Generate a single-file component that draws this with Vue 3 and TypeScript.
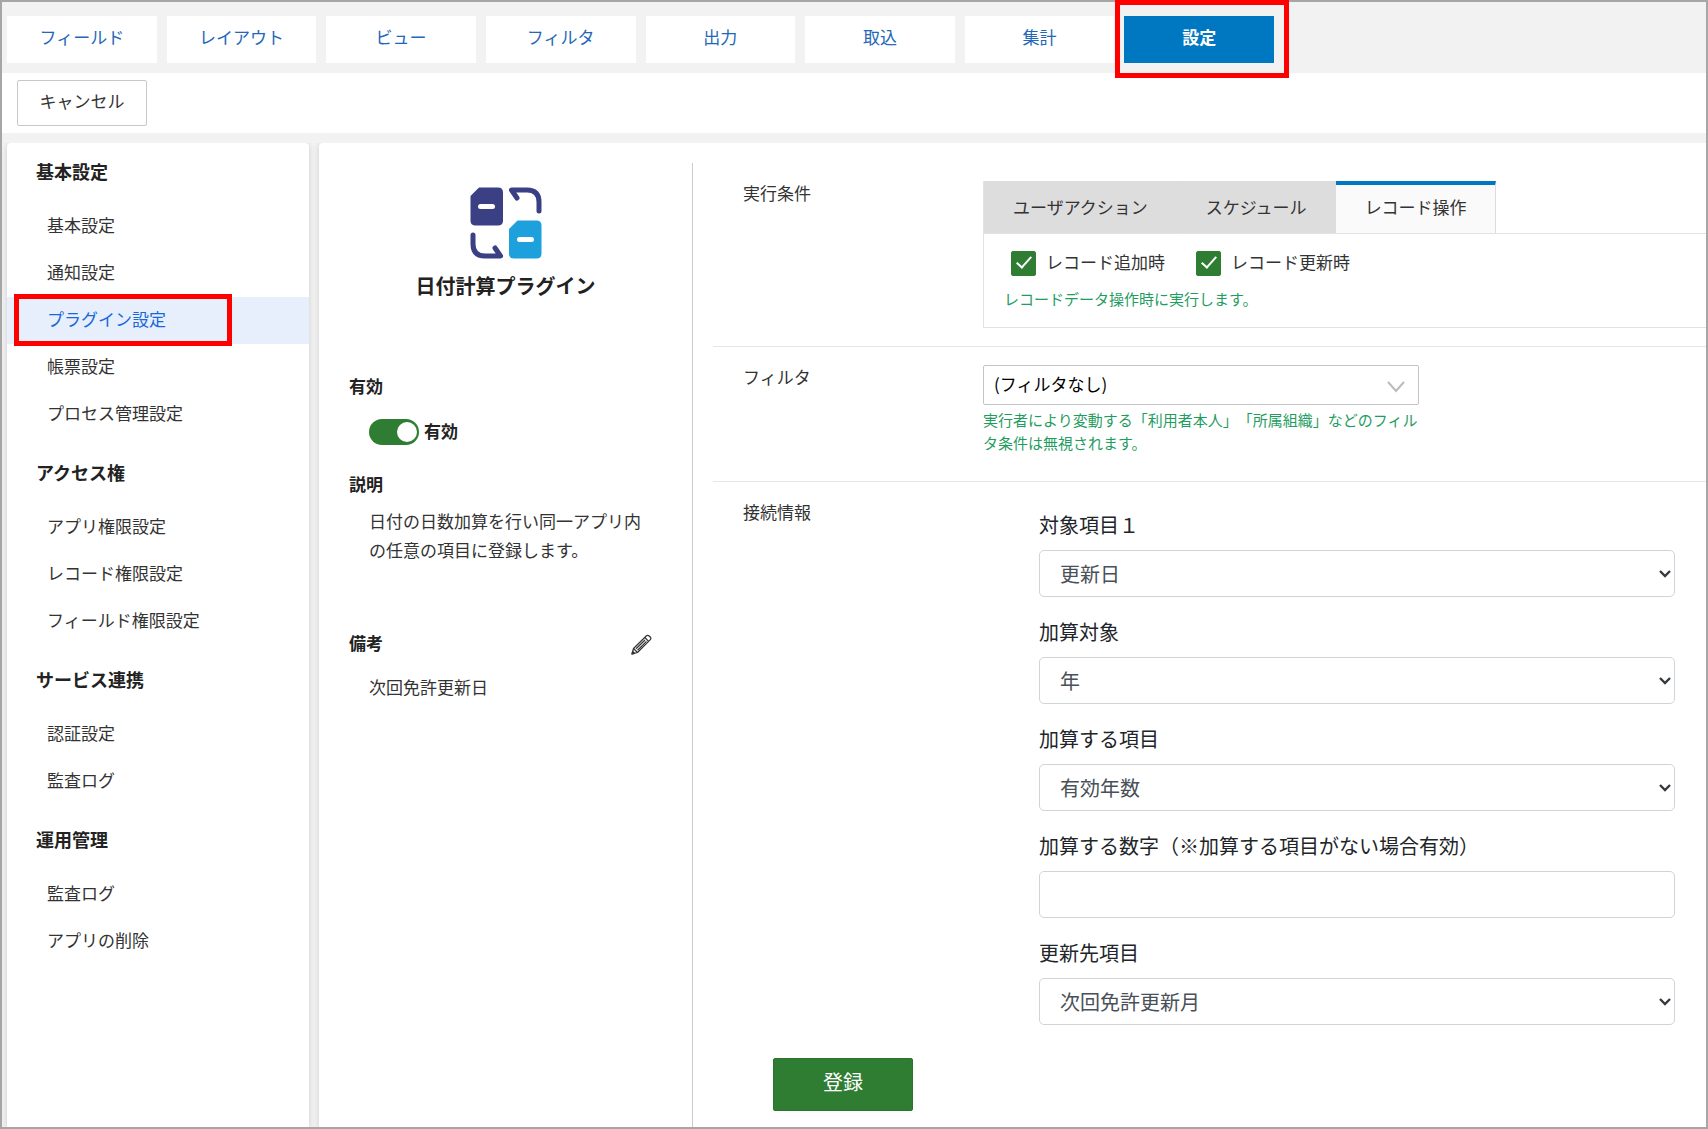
<script setup lang="ts">
import { ref } from 'vue'

interface MenuGroup {
  title: string
  items: string[]
}

interface Field {
  id: string
  label: string
  kind: 'select' | 'text'
  value: string
}

const mainTabs: string[] = ['フィールド', 'レイアウト', 'ビュー', 'フィルタ', '出力', '取込', '集計', '設定']
const activeMainTab = '設定'

const menu: MenuGroup[] = [
  { title: '基本設定', items: ['基本設定', '通知設定', 'プラグイン設定', '帳票設定', 'プロセス管理設定'] },
  { title: 'アクセス権', items: ['アプリ権限設定', 'レコード権限設定', 'フィールド権限設定'] },
  { title: 'サービス連携', items: ['認証設定', '監査ログ'] },
  { title: '運用管理', items: ['監査ログ', 'アプリの削除'] },
]
const activeMenu = 'プラグイン設定'

const triggerTabs: string[] = ['ユーザアクション', 'スケジュール', 'レコード操作']
const activeTrigger = ref('レコード操作')

const enabled = ref(true)
const onCreate = ref(true)
const onUpdate = ref(true)

const fields = ref<Field[]>([
  { id: 'target', label: '対象項目１', kind: 'select', value: '更新日' },
  { id: 'unit', label: '加算対象', kind: 'select', value: '年' },
  { id: 'addend', label: '加算する項目', kind: 'select', value: '有効年数' },
  { id: 'amount', label: '加算する数字（※加算する項目がない場合有効）', kind: 'text', value: '' },
  { id: 'destination', label: '更新先項目', kind: 'select', value: '次回免許更新月' },
])
</script>

<template>
  <div class="page">
    <nav class="main-tabs">
      <a
        v-for="tab in mainTabs"
        :key="tab"
        href="#"
        class="main-tab"
        :class="{ active: tab === activeMainTab }"
      >{{ tab }}<span v-if="tab === activeMainTab" class="marker"></span></a>
    </nav>

    <div class="toolbar">
      <button type="button" class="cancel">キャンセル</button>
    </div>

    <div class="body">
      <aside class="sidebar">
        <section v-for="group in menu" :key="group.title" class="menu-group">
          <h2 class="menu-title">{{ group.title }}</h2>
          <a
            v-for="item in group.items"
            :key="item"
            href="#"
            class="menu-item"
            :class="{ active: item === activeMenu }"
          >{{ item }}<span v-if="item === activeMenu" class="marker"></span></a>
        </section>
      </aside>

      <main class="panel">
        <section class="summary">
          <svg class="plugin-icon" viewBox="0 0 72 72" aria-hidden="true">
            <path d="M9 0.500H28Q33 0.500 33 5.500V33.500Q33 38.500 28 38.500H5.500Q0.500 38.500 0.500 33.500V9Z" fill="#3a4083" />
            <path d="M47.500 33.500H66.500Q71.500 33.500 71.500 38.500V66.500Q71.500 71.500 66.500 71.500H44Q39 71.500 39 66.500V42Z" fill="#1ea0dc" />
            <rect x="8" y="17" width="17" height="5" rx="2.500" fill="#fff" />
            <rect x="47" y="50" width="17" height="5" rx="2.500" fill="#fff" />
            <path d="M47 11L41.500 3H57Q69 3 69 15V24" fill="none" stroke="#3a4083" stroke-width="5" stroke-linecap="round" stroke-linejoin="round" />
            <path d="M25 61L30.500 69H15Q3 69 3 57V48" fill="none" stroke="#3a4083" stroke-width="5" stroke-linecap="round" stroke-linejoin="round" />
          </svg>
          <h1 class="plugin-name">日付計算プラグイン</h1>

          <h3 class="caption">有効</h3>
          <label class="switch">
            <input v-model="enabled" type="checkbox" class="switch-input" />
            <span>有効</span>
          </label>

          <h3 class="caption">説明</h3>
          <p class="description">日付の日数加算を行い同一アプリ内の任意の項目に登録します。</p>

          <div class="note-head">
            <h3 class="caption">備考</h3>
            <button type="button" class="edit" aria-label="編集">
              <svg viewBox="0 0 21 21" width="21" height="21" fill="none" stroke="#333" stroke-width="1.200" stroke-linejoin="round">
                <path d="M1 20L2.500 14.500L15.500 1.800Q16.800 0.700 18.200 2L19.200 3Q20.500 4.400 19.300 5.600L6.500 18.500Z" />
                <path d="M2.500 14.500L6.500 18.500M13.800 3.500L17.600 7.300M5 14.800L14 6M6.600 16.200L15.500 7.400" />
                <path d="M1 20L1.700 17.300L3.700 19.300Z" fill="#333" />
              </svg>
            </button>
          </div>
          <p class="note">次回免許更新日</p>
        </section>

        <form class="settings" @submit.prevent>
          <div class="row">
            <div class="row-label">実行条件</div>
            <div class="trigger">
              <div class="trigger-tabs" role="tablist">
                <button
                  v-for="tab in triggerTabs"
                  :key="tab"
                  type="button"
                  role="tab"
                  class="trigger-tab"
                  :class="{ active: tab === activeTrigger }"
                  :aria-selected="tab === activeTrigger"
                  @click="activeTrigger = tab"
                >{{ tab }}</button>
              </div>
              <div class="trigger-body">
                <div class="checks">
                  <label class="check"><input v-model="onCreate" type="checkbox" class="check-input" />レコード追加時</label>
                  <label class="check"><input v-model="onUpdate" type="checkbox" class="check-input" />レコード更新時</label>
                </div>
                <p class="hint">レコードデータ操作時に実行します。</p>
              </div>
            </div>
          </div>

          <div class="row">
            <label class="row-label" for="filter">フィルタ</label>
            <div class="filter">
              <div class="select-wrap">
                <select id="filter" class="filter-select">
                  <option>(フィルタなし)</option>
                </select>
                <svg class="filter-arrow" viewBox="0 0 18 12" aria-hidden="true"><path d="M1 1L9 10L17 1" fill="none" stroke="#bbb" stroke-width="2" /></svg>
              </div>
              <p class="hint">実行者により変動する「利用者本人」「所属組織」などのフィルタ条件は無視されます。</p>
            </div>
          </div>

          <div class="row">
            <div class="row-label">接続情報</div>
            <div class="fields">
              <div v-for="field in fields" :key="field.id" class="field">
                <label class="field-label" :for="field.id">{{ field.label }}</label>
                <div v-if="field.kind === 'select'" class="select-wrap">
                  <select :id="field.id" v-model="field.value" class="control">
                    <option>{{ field.value }}</option>
                  </select>
                  <svg class="arrow" viewBox="0 0 12 8" aria-hidden="true"><path d="M1 1L6 6L11 1" fill="none" stroke="#343a40" stroke-width="2.400" /></svg>
                </div>
                <input v-else :id="field.id" v-model="field.value" type="text" class="control" />
              </div>
            </div>
          </div>

          <button type="submit" class="submit">登録</button>
        </form>
      </main>
    </div>
  </div>
</template>

<style>
body {
  margin: 0;
}
</style>

<style scoped>
*,
*::before,
*::after {
  box-sizing: border-box;
}

h1,
h2,
h3,
p {
  margin: 0;
}

button,
input,
select {
  margin: 0;
  font-family: inherit;
}

.page {
  display: flex;
  flex-direction: column;
  min-height: 100vh;
  border: 2px solid #a6a6a6;
  background: #f2f2f2;
  color: #333;
  font-family: "Noto Sans CJK JP", "Noto Sans", sans-serif;
  font-size: 17px;
  line-height: 24px;
  text-spacing-trim: space-all;
}

.marker {
  position: absolute;
  z-index: 2;
  border: 5px solid #f00;
  pointer-events: none;
}

.main-tabs {
  display: grid;
  grid-template-columns: repeat(8, 1fr);
  gap: 10px;
  width: 100%;
  max-width: 1277px;
  padding: 14px 5px 10px;
}

.main-tab {
  position: relative;
  height: 47px;
  background: #fff;
  color: #2467b8;
  line-height: 42px;
  text-align: center;
  text-decoration: none;
}

.main-tab.active {
  background: #0078c1;
  color: #fff;
  font-weight: 700;
}

.main-tab .marker {
  inset: -16px -15px -15px -9px;
}

.toolbar {
  padding: 7px 15px;
  background: #fff;
}

.cancel {
  display: block;
  width: 130px;
  height: 46px;
  padding: 0 0 6px;
  border: 1px solid #c8c8c8;
  border-radius: 2px;
  background: #fff;
  color: #333;
  font-size: 17px;
}

.body {
  display: flex;
  flex: 1;
  gap: 10px;
  padding: 10px 0 0 5px;
}

.sidebar {
  display: flex;
  flex: none;
  flex-direction: column;
  gap: 6px;
  width: 302px;
  border-radius: 4px 4px 0 0;
  background: #fff;
  box-shadow: 0 1px 6px rgba(0, 0, 0, 0.15);
  clip-path: inset(0 -6px 0 -6px);
}

.menu-title {
  padding: 15px 29px 19px;
  color: #222;
  font-size: 18px;
  font-weight: 700;
  line-height: 26px;
}

.menu-item {
  position: relative;
  display: block;
  height: 47px;
  padding-left: 40px;
  color: #333;
  line-height: 44px;
  text-decoration: none;
}

.menu-item.active {
  background: #e7effd;
  color: #1a67d8;
}

.menu-item .marker {
  top: -3px;
  left: 7px;
  width: 218px;
  height: 52px;
}

.panel {
  display: flex;
  flex: 1;
  min-width: 0;
  border-radius: 4px 0 0 0;
  background: #fff;
  box-shadow: 0 1px 6px rgba(0, 0, 0, 0.15);
  clip-path: inset(0 0 0 -6px);
}

.summary {
  flex: none;
  width: 373px;
  padding: 44px 40px 0 30px;
}

.plugin-icon {
  display: block;
  width: 72px;
  height: 72px;
  margin: 0 0 12px 121px;
}

.plugin-name {
  margin: 0 -10px 73px 0;
  color: #222;
  font-size: 20px;
  font-weight: 700;
  line-height: 30px;
  text-align: center;
}

.caption {
  padding-bottom: 2px;
  color: #222;
  font-size: 17px;
  font-weight: 700;
  line-height: 24px;
}

.switch {
  display: flex;
  align-items: flex-start;
  gap: 5px;
  height: 26px;
  margin: 19px 0 27px 20px;
  color: #222;
  font-weight: 700;
}

.switch-input {
  appearance: none;
  width: 50px;
  height: 26px;
  border-radius: 13px;
  background: #999;
}

.switch-input::before {
  display: block;
  width: 20px;
  height: 20px;
  margin: 3px;
  border-radius: 50%;
  background: #fff;
  content: "";
}

.switch-input:checked {
  background: #2e7d32;
}

.switch-input:checked::before {
  margin-left: 28px;
}

.description,
.note {
  padding-left: 20px;
  line-height: 29px;
}

.description {
  margin: 8px 0 67px;
}

.note {
  margin-top: 15px;
}

.note-head {
  display: flex;
  align-items: center;
  justify-content: space-between;
}

.edit {
  display: block;
  height: 21px;
  padding: 0;
  border: 0;
  background: none;
}

.edit svg {
  display: block;
}

.settings {
  flex: 1;
  min-width: 0;
  margin-top: 20px;
  padding: 0 0 14px 20px;
  border-left: 1px solid #ccc;
}

.row {
  display: flex;
  padding: 18px 0 0 30px;
}

.row + .row {
  border-top: 1px solid #e6e6e6;
}

.row-label {
  flex: none;
  width: 240px;
}

.trigger {
  flex: 1;
  min-width: 0;
  margin-bottom: 18px;
  border: 1px solid #dfe3e8;
  border-width: 0 0 1px 1px;
}

.trigger-tabs {
  display: flex;
  border-bottom: 1px solid #dfe3e8;
}

.trigger-tab {
  height: 52px;
  padding: 0 28px 2px 29px;
  border: 0;
  border-right: 1px solid #d8dde2;
  background: #ddd;
  color: #333;
  font-size: 17px;
}

.trigger-tab.active {
  padding-bottom: 6px;
  border-top: 4px solid #0078c1;
  background: #fafafa;
}

.trigger-body {
  padding: 16px 20px 17px;
}

.checks {
  display: flex;
  gap: 31px;
  margin-bottom: 9px;
  padding-left: 7px;
}

.check {
  display: flex;
  align-items: flex-start;
  gap: 10px;
  height: 28px;
}

.check-input {
  appearance: none;
  display: grid;
  width: 25px;
  height: 25px;
  margin-top: 1px;
  border: 1px solid #2e7d32;
  border-radius: 2px;
  background: #fff;
}

.check-input:checked {
  background: #2e7d32;
}

.check-input:checked::before {
  width: 8px;
  height: 15px;
  margin: 1px auto 0;
  border: solid #fff;
  border-width: 0 2px 2px 0;
  transform: rotate(42deg);
  content: "";
}

.hint {
  color: #1f9d61;
  font-size: 15px;
  line-height: 23px;
}

.filter {
  width: 436px;
  padding-bottom: 27px;
}

.filter .hint {
  margin-top: 3px;
}

.select-wrap {
  position: relative;
}

.filter-select {
  appearance: none;
  display: block;
  width: 100%;
  height: 40px;
  padding: 0 40px 4px 10px;
  border: 1px solid #c4c4c4;
  border-radius: 2px;
  background: #fff;
  color: #000;
  font-size: 17px;
}

.filter-arrow {
  position: absolute;
  top: 16px;
  right: 14px;
  width: 18px;
  height: 12px;
  pointer-events: none;
}

.fields {
  display: flex;
  flex: 1;
  flex-direction: column;
  gap: 20px;
  min-width: 0;
  padding: 10px 31px 0 56px;
}

.field {
  display: flex;
  flex-direction: column;
  gap: 10px;
}

.field-label {
  color: #212529;
  font-size: 20px;
  line-height: 30px;
}

.control {
  appearance: none;
  display: block;
  width: 100%;
  height: 47px;
  padding: 0 30px 0 20px;
  border: 1px solid #ced4da;
  border-radius: 5px;
  background: #fff;
  color: #495057;
  font-size: 20px;
}

.arrow {
  position: absolute;
  top: 20px;
  right: 4px;
  width: 12px;
  height: 8px;
  pointer-events: none;
}

.submit {
  display: block;
  width: 140px;
  height: 53px;
  margin: 33px 0 0 60px;
  padding: 0 0 6px;
  border: 1px solid #28752c;
  border-radius: 2px;
  background: #2e7d32;
  color: #fff;
  font-size: 20px;
}
</style>
